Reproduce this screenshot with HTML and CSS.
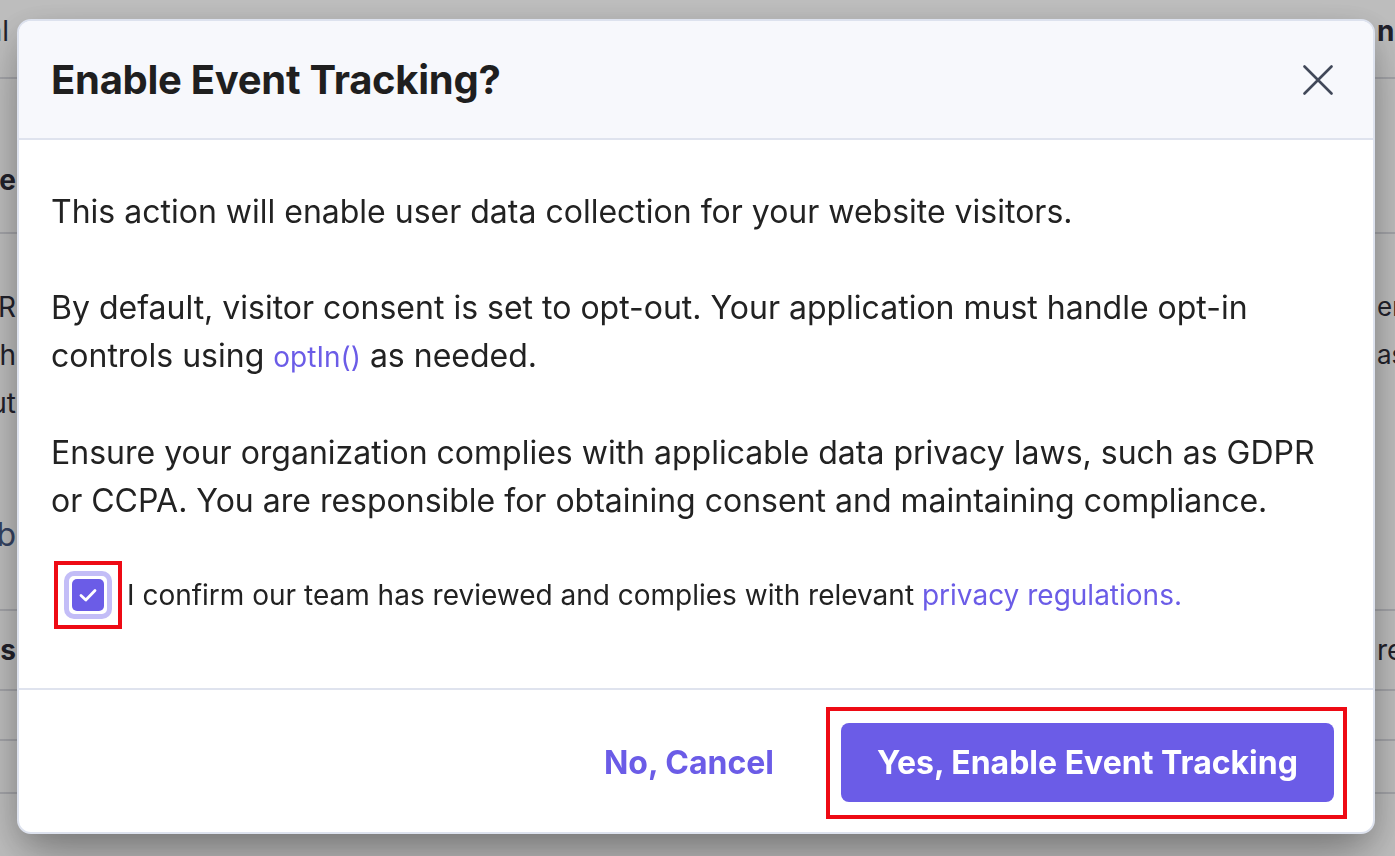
FILE: index.html
```html
<!DOCTYPE html>
<html lang="en">
<head>
<meta charset="utf-8">
<title>Enable Event Tracking?</title>
<link rel="stylesheet" href="styles.css">
</head>
<body>
<div class="page">
  <div class="bg-row r1"><div class="bg-l narrow"><span>Total</span></div><div class="bg-r"><span class="b">nir</span></div></div>
  <div class="bg-row r2"><div class="bg-l"><span class="b">Theme</span></div><div class="bg-r"></div></div>
  <div class="bg-row r3">
    <div class="bg-l col">
      <span>GDPR</span><span>Checkh</span><span>About</span><span class="blue big">Web</span>
    </div>
    <div class="bg-r col"><span>ena</span><span>assigned</span></div>
  </div>
  <div class="bg-row r4"><div class="bg-l"><span class="b">Tools</span></div><div class="bg-r"><span>records</span></div></div>
  <div class="bg-row r5"><div class="bg-l"></div><div class="bg-r"></div></div>
  <div class="bg-row r6"><div class="bg-l"></div><div class="bg-r"></div></div>
</div>
<div class="overlay"></div>
<div class="modal" role="dialog" aria-labelledby="dlg-title">
  <header class="modal-head">
    <h1 id="dlg-title" class="modal-title">Enable Event Tracking?</h1>
    <button class="close" aria-label="Close">
      <svg width="30" height="30" viewBox="0 0 30 30" fill="none" stroke="#414859" stroke-width="2.6" stroke-linecap="round"><path d="M1.5 1.5 L28.5 28.5 M28.5 1.5 L1.5 28.5"/></svg>
    </button>
  </header>
  <div class="modal-body">
    <p>This action will enable user data collection for your website visitors.</p>
    <p>By default, visitor consent is set to opt-out. Your application must handle opt-in controls using <a class="code-link" href="#">optIn()</a> as needed.</p>
    <p>Ensure your organization complies with applicable data privacy laws, such as GDPR or CCPA. You are responsible for obtaining consent and maintaining compliance.</p>
    <label class="confirm">
      <span class="mark-box">
        <span class="ring">
          <span class="check">
            <svg width="22" height="22" viewBox="0 0 22 22" fill="none" stroke="#fff" stroke-width="2.8" stroke-linecap="round" stroke-linejoin="round"><path d="M4 11.5 L8.8 16 L18 6.5"/></svg>
          </span>
        </span>
      </span>
      <span class="confirm-text">I confirm our team has reviewed and complies with relevant <a class="link" href="#">privacy regulations.</a></span>
    </label>
  </div>
  <footer class="modal-foot">
    <button class="btn-cancel">No, Cancel</button>
    <span class="mark-btn">
      <button class="btn-primary">Yes, Enable Event Tracking</button>
    </span>
  </footer>
</div>
</body>
</html>
```
FILE: styles.css
```css
* { box-sizing: border-box; }
html, body {
  margin: 0;
  width: 1395px;
  height: 856px;
  overflow: hidden;
  font-family: Inter, "Noto Sans", sans-serif;
  background: #fff;
}

/* background page */
.page {
  display: flex;
  flex-direction: column;
  width: 1395px;
  height: 856px;
  background: #fff;
  color: #2d2d3a;
  font-size: 28px;
}
.bg-row {
  display: flex;
  justify-content: space-between;
  border-bottom: 2px solid #dcdde3;
}
.bg-l {
  width: 16px;
  display: flex;
  justify-content: flex-end;
  overflow: hidden;
  white-space: nowrap;
}
.bg-l.narrow { width: 9px; }
.bg-r {
  width: 18px;
  display: flex;
  overflow: hidden;
  white-space: nowrap;
}
.bg-l.col, .bg-r.col {
  flex-direction: column;
  align-items: flex-end;
  line-height: 48px;
  padding-top: 49px;
}
.bg-r.col { align-items: flex-start; font-size: 26px; }
.b { font-weight: 700; }
.blue { color: #475a85; }
.big { font-size: 32px; margin-top: 84px; }
.r1 { height: 79px; align-items: flex-start; padding-top: 14px; }
.r2 { height: 155px; align-items: flex-start; padding-top: 84px; }
.r3 { height: 377px; align-items: flex-start; }
.r4 { height: 80px; align-items: center; }
.r5 { height: 50px; }
.r6 { height: 53px; }

.overlay {
  position: fixed;
  inset: 0;
  background: rgba(0, 0, 0, 0.26);
}

/* modal */
.modal {
  position: fixed;
  left: 17px;
  top: 19px;
  width: 1358px;
  height: 815px;
  display: flex;
  flex-direction: column;
  background: #fff;
  border: 2px solid #dde2ee;
  border-radius: 14px;
  box-shadow: 0 25px 50px -6px rgba(0, 0, 0, 0.32), 0 8px 30px rgba(0, 0, 0, 0.12);
  color: #222;
}
.modal-head {
  height: 119px;
  flex: none;
  display: flex;
  align-items: center;
  justify-content: space-between;
  padding: 0 40px 0 32px;
  background: #f7f8fc;
  border-bottom: 2px solid #dfe3ee;
  border-radius: 12px 12px 0 0;
}
.modal-title {
  margin: 0;
  font-size: 40px;
  font-weight: 700;
  letter-spacing: -0.28px;
  color: #1f1f1f;
}
.close {
  display: flex;
  padding: 0;
  border: 0;
  background: none;
}

.modal-body {
  flex: 1;
  padding: 48px 32px 0;
  font-size: 32px;
  line-height: 48px;
}
.modal-body p { margin: 0 0 48px; }
.code-link, .link {
  color: #6b5ce7;
  text-decoration: none;
}
.code-link { font-size: 28px; }

.confirm {
  display: flex;
  align-items: center;
  gap: 5px;
  margin-top: -12px;
  font-size: 28px;
}
.mark-box {
  flex: none;
  display: flex;
  padding: 6px;
  border: 4px solid #ee0a14;
  margin-left: 3px;
}
.ring {
  display: flex;
  padding: 3px;
  border: 5px solid #c3bdf7;
  border-radius: 10px;
  background: #fff;
}
.check {
  width: 32px;
  height: 32px;
  display: flex;
  align-items: center;
  justify-content: center;
  background: #6b5ce7;
  border-radius: 5px;
}

.modal-foot {
  height: 144px;
  flex: none;
  display: flex;
  align-items: center;
  justify-content: flex-end;
  gap: 52px;
  padding: 3px 26px 0 32px;
  border-top: 2px solid #dfe3ee;
}
.btn-cancel, .btn-primary {
  font-family: Inter, "Noto Sans", sans-serif;
  font-size: 32px;
  font-weight: 700;
  border: 0;
  cursor: pointer;
}
.btn-cancel {
  background: none;
  color: #6b5ce7;
  padding: 0;
}
.mark-btn {
  display: flex;
  padding: 12px 9px 13px 11px;
  border: 4px solid #ee0a14;
}
.btn-primary {
  width: 493px;
  height: 79px;
  background: #6b5ce7;
  color: #fff;
  border-radius: 8px;
}
```
